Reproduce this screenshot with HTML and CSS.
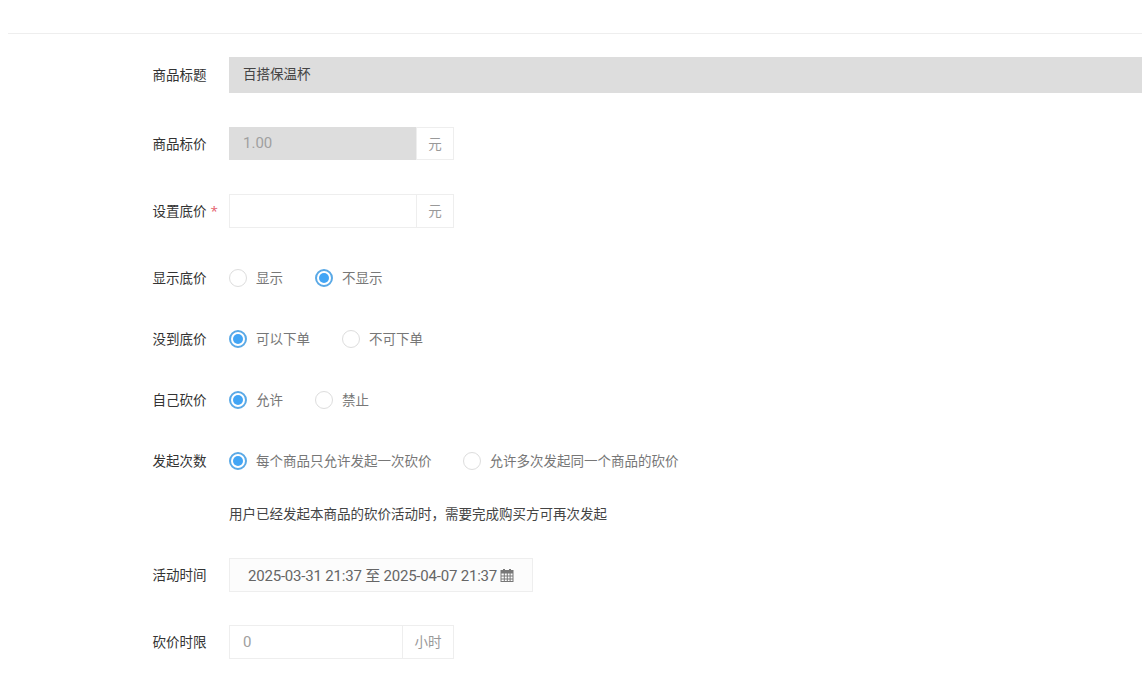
FILE: index.html
```html
<!DOCTYPE html>
<html lang="zh-CN">
<head>
<meta charset="utf-8">
<title>砍价活动</title>
<link rel="stylesheet" href="styles.css">
</head>
<body>
<div class="divider"></div>
<form class="form">
  <div class="row row-title">
    <label class="label">商品标题</label>
    <div class="title-input">百搭保温杯</div>
  </div>
  <div class="row row-price">
    <label class="label">商品标价</label>
    <div class="group">
      <div class="field field-disabled"><span class="lift">1.00</span></div>
      <div class="addon"><span class="lift">元</span></div>
    </div>
  </div>
  <div class="row row-floor">
    <label class="label">设置底价<span class="req">*</span></label>
    <div class="group">
      <div class="field"></div>
      <div class="addon"><span class="lift">元</span></div>
    </div>
  </div>
  <div class="row row-radio-first">
    <label class="label">显示底价</label>
    <div class="radios">
      <span class="radio"></span><span class="opt opt-gap">显示</span>
      <span class="radio on"></span><span class="opt">不显示</span>
    </div>
  </div>
  <div class="row row-radio">
    <label class="label">没到底价</label>
    <div class="radios">
      <span class="radio on"></span><span class="opt opt-gap">可以下单</span>
      <span class="radio"></span><span class="opt">不可下单</span>
    </div>
  </div>
  <div class="row row-radio">
    <label class="label">自己砍价</label>
    <div class="radios">
      <span class="radio on"></span><span class="opt opt-gap">允许</span>
      <span class="radio"></span><span class="opt">禁止</span>
    </div>
  </div>
  <div class="row row-radio">
    <label class="label">发起次数</label>
    <div class="radios">
      <span class="radio on"></span><span class="opt opt-wide">每个商品只允许发起一次砍价</span>
      <span class="radio"></span><span class="opt">允许多次发起同一个商品的砍价</span>
    </div>
  </div>
  <div class="row row-note">
    <div class="label"></div>
    <div class="note">用户已经发起本商品的砍价活动时，需要完成购买方可再次发起</div>
  </div>
  <div class="row row-date">
    <label class="label">活动时间</label>
    <div class="date">
      <span class="date-text">2025-03-31 21:37 至 2025-04-07 21:37</span>
      <svg class="cal" width="14" height="15" viewBox="0 0 14 15" aria-hidden="true">
        <path fill="#777" fill-rule="evenodd" d="M3 1h2v1h4V1h2v1h2.500v12H.5V2H3zM1.500 5.500v2h2.300v-2zm3.300 0v2h2v-2zm3 0v2h1.800v-2zm2.800 0v2h1.900v-2zM1.500 8.500v2h2.300v-2zm3.300 0v2h2v-2zm3 0v2h1.800v-2zm2.800 0v2h1.900v-2zM1.500 11.500V13h2.300v-1.500zm3.300 0V13h2v-1.500zm3 0V13h1.800v-1.500zm2.800 0V13h1.900v-1.500z"/>
      </svg>
    </div>
  </div>
  <div class="row row-hours">
    <label class="label">砍价时限</label>
    <div class="group">
      <div class="field field-hours"><span>0</span></div>
      <div class="addon addon-hours"><span class="lift">小时</span></div>
    </div>
  </div>
</form>
</body>
</html>
```
FILE: styles.css
```css
html, body {
  margin: 0;
  padding: 0;
  background: #fff;
  overflow: hidden;
  height: 684px;
}
body {
  font-family: "Open Sans", "Liberation Sans", "Noto Sans CJK SC", sans-serif;
  font-size: 13.5px;
  color: #333;
}
.divider {
  height: 1px;
  margin: 33px 0 0 8px;
  background: #eee;
}
.form {
  padding-left: 152.5px;
}
.row {
  display: flex;
  align-items: center;
  height: 34px;
}
.row-title { height: 36px; margin-top: 23px; }
.row-price { height: 33px; margin-top: 34px; }
.row-floor { margin-top: 34px; }
.row-radio-first { margin-top: 33px; }
.row-radio { margin-top: 27px; }
.row-note { margin-top: 19px; }
.row-date { margin-top: 27px; }
.row-hours { margin-top: 33px; }
.label {
  flex: none;
  width: 76.5px;
  margin-top: -2px;
  color: #333;
  white-space: nowrap;
}
.req {
  color: #e4606d;
  margin-left: 4px;
}
.title-input {
  flex: 1;
  height: 36px;
  box-sizing: border-box;
  padding-left: 14px;
  line-height: 34px;
  background: #ddd;
  color: #444;
}
.group {
  display: flex;
  height: 100%;
  width: 225px;
}
.field {
  flex: 1;
  box-sizing: border-box;
  padding-left: 13px;
  border: 1px solid #eee;
  border-right: 0;
  display: flex;
  align-items: center;
  font-family: Roboto, "Noto Sans CJK SC", sans-serif;
  font-size: 15px;
  color: #a0a0a0;
}
.field-disabled {
  background: #ddd;
  border-color: #ddd;
}
.addon {
  flex: none;
  width: 38px;
  box-sizing: border-box;
  border: 1px solid #eee;
  display: flex;
  align-items: center;
  justify-content: center;
  color: #999;
}
.addon-hours { width: 52px; }
.lift { margin-top: -2px; }
.radios {
  display: flex;
  align-items: center;
}
.radio {
  flex: none;
  width: 18px;
  height: 18px;
  box-sizing: border-box;
  border: 1px solid #ddd;
  border-radius: 50%;
  background: #fff;
  margin-right: 9px;
  display: flex;
  align-items: center;
  justify-content: center;
}
.radio.on {
  border: 2px solid #5aa9e6;
}
.radio.on::after {
  content: "";
  width: 10px;
  height: 10px;
  border-radius: 50%;
  background: #42a5f5;
}
.opt {
  margin-top: -2px;
  color: #777;
  white-space: nowrap;
}
.opt-gap { margin-right: 32px; }
.opt-wide { margin-right: 31px; }
.note {
  margin-top: -2px;
  color: #444;
  white-space: nowrap;
}
.date {
  box-sizing: border-box;
  width: 304px;
  height: 100%;
  padding-left: 18px;
  display: flex;
  align-items: center;
  gap: 3px;
  border: 1px solid #eee;
  background: #fcfcfc;
  color: #666;
  font-family: Roboto, "Noto Sans CJK SC", sans-serif;
  font-size: 15px;
  letter-spacing: -0.2px;
  white-space: nowrap;
}
.date-text { margin-top: -2px; }
.cal { flex: none; }
```
